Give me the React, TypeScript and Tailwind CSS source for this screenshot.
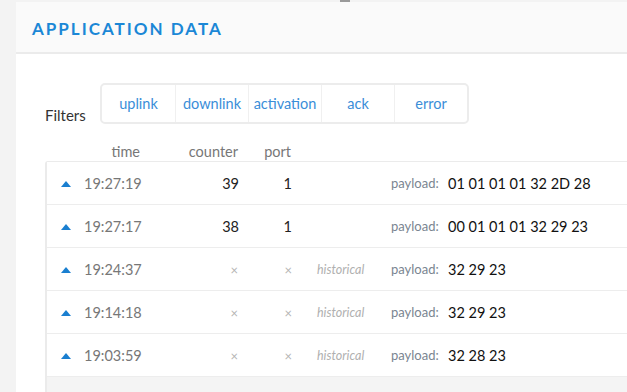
import React from "react";

type Row = {
  time: string;
  counter?: string;
  port?: string;
  historical?: boolean;
  payload: string;
};

const rows: Row[] = [
  { time: "19:27:19", counter: "39", port: "1", payload: "01 01 01 01 32 2D 28" },
  { time: "19:27:17", counter: "38", port: "1", payload: "00 01 01 01 32 29 23" },
  { time: "19:24:37", historical: true, payload: "32 29 23" },
  { time: "19:14:18", historical: true, payload: "32 29 23" },
  { time: "19:03:59", historical: true, payload: "32 28 23" },
];

const filters = ["uplink", "downlink", "activation", "ack", "error"];

function Arrow() {
  return (
    <svg width="10" height="6" viewBox="0 0 10 6" className="block">
      <path d="M5 0 L10 6 L0 6 Z" fill="#1a7fd0" />
    </svg>
  );
}

export default function App() {
  return (
    <div
      className="relative w-[627px] h-[392px] overflow-hidden bg-[#f3f3f3] flex"
      style={{ fontFamily: "Lato, 'Open Sans', sans-serif" }}
    >
      <div className="absolute left-[340px] top-0 w-[10px] h-[2px] bg-[#9a9a9a]" />
      <div className="w-[16px] shrink-0" />
      <div className="flex-1 mt-[2px] bg-white flex flex-col">
        <div className="h-[52px] shrink-0 bg-[#fafafa] border-b-2 border-[#ebebeb] flex items-center pl-[16px]">
          <h1 className="text-[17px] font-bold tracking-[2px] text-[#1b87d6] leading-none pt-[2px]">
            APPLICATION DATA
          </h1>
        </div>
        <div className="pl-[29px] pt-[29px] flex flex-col">
          <div className="flex items-end">
            <span className="text-[15px] text-[#333] leading-none w-[55px] pb-[1px]">Filters</span>
            <div className="flex h-[41px] border-2 border-[#ececec] rounded-[5px]">
              {filters.map((f, i) => (
                <div
                  key={f}
                  className={`w-[73px] flex items-center justify-center text-[14.5px] text-[#3a8ed8] ${
                    i > 0 ? "border-l border-[#f0f0f0]" : ""
                  }`}
                >
                  {f}
                </div>
              ))}
            </div>
          </div>
          <div className="flex text-[14.5px] leading-[16px] text-[#777] h-[37px] items-end pb-[1px] pl-[16px]">
            <div className="w-[23px]" />
            <div className="w-[56px] text-right">time</div>
            <div className="w-[98px] text-right">counter</div>
            <div className="w-[53px] text-right">port</div>
          </div>
          <div className="border-t border-l-2 border-[#ebebeb] rounded-tl-[3px] bg-[#f4f4f4] h-[240px]">
            {rows.map((r, i) => (
              <div
                key={i}
                className="h-[43px] bg-white border-b border-[#ededed] flex items-center pl-[14px] pt-[2px] text-[14.5px]"
              >
                <div className="w-[23px] flex items-center">
                  <Arrow />
                </div>
                <div className="w-[57px] text-[#777]">{r.time}</div>
                <div className="w-[98px] text-right">
                  {r.counter ? (
                    <span className="text-[#222]">{r.counter}</span>
                  ) : (
                    <span className="text-[#b5b5b5] text-[13px] pr-[1px]">×</span>
                  )}
                </div>
                <div className="w-[53px] text-right">
                  {r.port ? (
                    <span className="text-[#222]">{r.port}</span>
                  ) : (
                    <span className="text-[#b5b5b5] text-[13px]">×</span>
                  )}
                </div>
                <div className="w-[25px]" />
                <div className="w-[74px] text-[12.5px] italic text-[#b0b0b0]">
                  {r.historical ? "historical" : ""}
                </div>
                <div className="w-[57px] text-[13px] text-[#7a8591]">payload:</div>
                <div className="text-[#111] whitespace-nowrap">{r.payload}</div>
              </div>
            ))}
          </div>
        </div>
      </div>
    </div>
  );
}
